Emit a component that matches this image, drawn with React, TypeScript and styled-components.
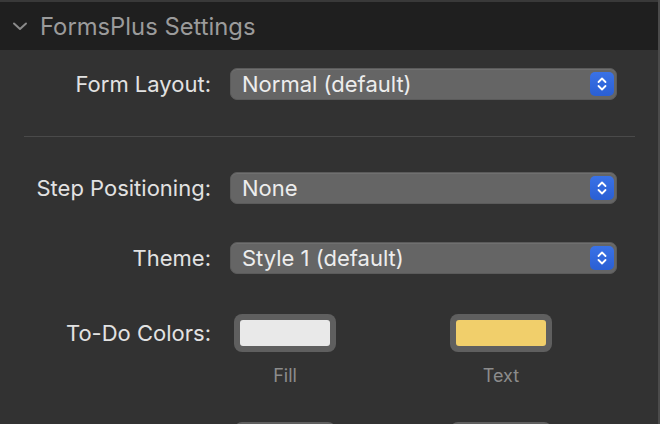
import React from "react";
import styled, { createGlobalStyle } from "styled-components";

const Global = createGlobalStyle`
  html, body { margin: 0; padding: 0; background: #323232; }
  body { font-family: Inter, "Noto Sans", sans-serif; -webkit-font-smoothing: antialiased; }
`;

const Page = styled.div`
  width: 660px;
  height: 424px;
  box-sizing: border-box;
  background: #323232;
  border-right: 2px solid #4b4b4b;
  overflow: hidden;
`;

const Header = styled.div`
  height: 48px;
  border-top: 2px solid #393939;
  background: #1f1f1f;
  display: flex;
  align-items: center;
  gap: 12px;
  padding-left: 12px;
`;

const Title = styled.span`
  font-size: 23.8px;
  color: #9b9b9b;
`;

const Content = styled.div`
  padding-right: 41px;
  display: flex;
  flex-direction: column;
`;

const Row = styled.div<{ $mt: number }>`
  display: grid;
  grid-template-columns: 211px 1fr;
  column-gap: 19px;
  align-items: center;
  margin-top: ${(p) => p.$mt}px;
`;

const Label = styled.div<{ $top?: boolean }>`
  text-align: right;
  font-size: 22px;
  color: #e2e2e2;
  ${(p) => (p.$top ? "align-self: start; margin-top: 6px;" : "")}
`;

const Popup = styled.div`
  height: 32px;
  box-sizing: border-box;
  border-radius: 7px;
  background: #656565;
  border: 1px solid #5b5b5b;
  box-shadow: inset 0 1px 0 #707070;
  display: flex;
  align-items: center;
  justify-content: space-between;
  padding: 0 2px 0 11px;
  font-size: 22px;
  color: #ededed;
`;

const Stepper = styled.div`
  width: 24px;
  height: 24px;
  border-radius: 5px;
  background: linear-gradient(#3a72e6, #2a5fd4);
  display: flex;
  align-items: center;
  justify-content: center;
`;

const Divider = styled.div`
  height: 1px;
  background: #4a4a4a;
  margin: 36px -18px 0 24px;
`;

const Wells = styled.div`
  display: flex;
  gap: 114px;
  padding-left: 4px;
`;

const WellCol = styled.div`
  display: flex;
  flex-direction: column;
  align-items: center;
  gap: 13px;
`;

const Well = styled.div<{ $color: string }>`
  width: 102px;
  height: 38px;
  box-sizing: border-box;
  border-radius: 8px;
  background: #5f5f5f;
  padding: 6px;
  &::after {
    content: "";
    display: block;
    width: 100%;
    height: 100%;
    border-radius: 3px;
    background: ${(p) => p.$color};
  }
`;

const WellLabel = styled.div`
  font-size: 18px;
  color: #8c8c8c;
  line-height: 22px;
`;

const Chevron = () => (
  <svg width="16" height="16" viewBox="0 0 16 16">
    <path d="M2 5.5 L8 11 L14 5.5" fill="none" stroke="#8a8a8a" strokeWidth="2" strokeLinecap="round" strokeLinejoin="round" />
  </svg>
);

const Arrows = () => (
  <svg width="12" height="16" viewBox="0 0 12 16">
    <path d="M2.5 6 L6 2.5 L9.5 6 M2.5 10 L6 13.5 L9.5 10" fill="none" stroke="#ffffff" strokeWidth="1.8" strokeLinecap="round" strokeLinejoin="round" />
  </svg>
);

const Select = ({ value }: { value: string }) => (
  <Popup>
    <span>{value}</span>
    <Stepper>
      <Arrows />
    </Stepper>
  </Popup>
);

export default function App() {
  return (
    <Page>
      <Global />
      <Header>
        <Chevron />
        <Title>FormsPlus Settings</Title>
      </Header>
      <Content>
        <Row $mt={18}>
          <Label>Form Layout:</Label>
          <Select value="Normal (default)" />
        </Row>
        <Divider />
        <Row $mt={35}>
          <Label>Step Positioning:</Label>
          <Select value="None" />
        </Row>
        <Row $mt={38}>
          <Label>Theme:</Label>
          <Select value="Style 1 (default)" />
        </Row>
        <Row $mt={40}>
          <Label $top>To-Do Colors:</Label>
          <Wells>
            <WellCol>
              <Well $color="#e9e9e9" />
              <WellLabel>Fill</WellLabel>
            </WellCol>
            <WellCol>
              <Well $color="#f1cf6b" />
              <WellLabel>Text</WellLabel>
            </WellCol>
          </Wells>
        </Row>
        <Row $mt={35}>
          <div />
          <Wells>
            <Well $color="#e9e9e9" />
            <Well $color="#f1cf6b" />
          </Wells>
        </Row>
      </Content>
    </Page>
  );
}
